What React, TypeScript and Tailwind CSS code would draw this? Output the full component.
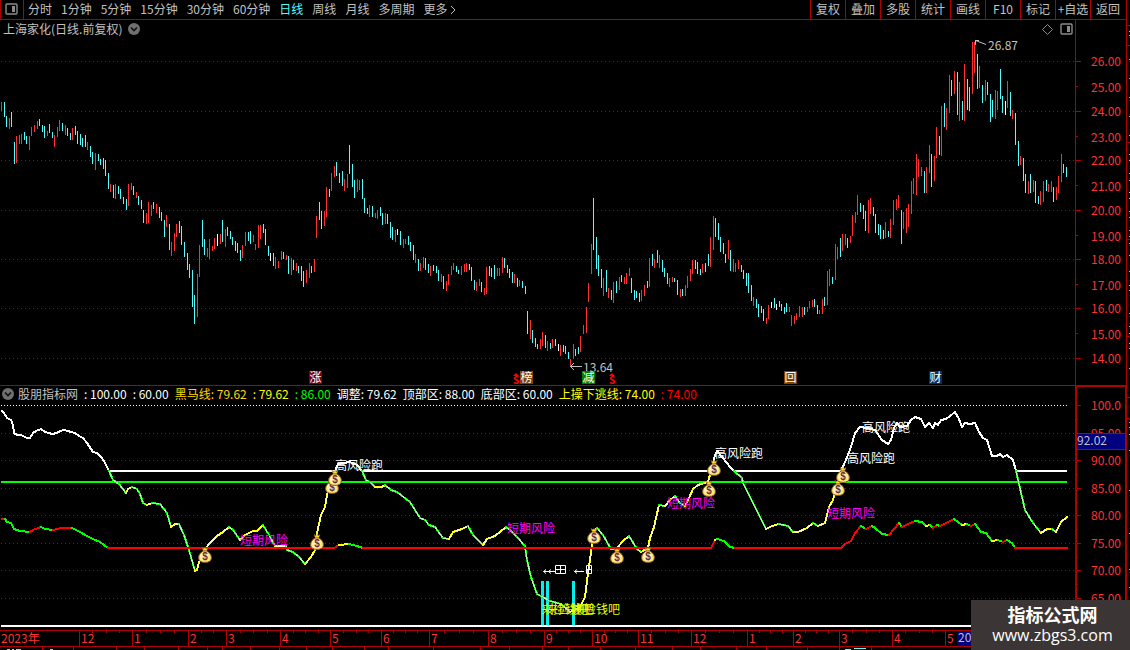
type Point = [number, number];

const RED = "#b00000";
const LABEL_RED = "#ff3232";
const UP = "#ff3232";
const DOWN = "#54fcfc";

const periods = ["分时", "1分钟", "5分钟", "15分钟", "30分钟", "60分钟", "日线", "周线", "月线", "多周期", "更多"];
const tools = ["复权", "叠加", "多股", "统计", "画线", "F10", "标记", "+自选", "返回"];

// each bar: x high low, then r (up), c (down) or w (unchanged)
const barData = `
1 102 111r,4 102 117c,6 116 127c,9 118 129r,11 112 127c,14 142 164c,16 136 163r,19 135 144r,21 134 144r,24 132 140c,
26 136 144c,29 136 150r,31 127 136r,34 125 132r,37 121 129r,39 119 126c,42 125 132c,44 126 138c,47 131 136r,49 124 133c,
52 132 138c,54 135 147r,57 127 137r,59 120 131r,62 123 131c,65 125 135r,67 128 136c,70 133 140c,72 128 140r,75 126 135c,
77 131 144c,80 134 145c,82 138 147c,85 135 147c,87 142 150r,90 146 157c,92 152 164c,95 153 170r,98 154 161c,100 159 165c,
103 158 169c,105 160 176c,108 173 189c,110 184 192r,113 185 198c,115 184 199r,118 186 194c,120 189 199c,123 197 204c,
126 199 210c,128 184 206r,131 183 190r,133 186 195c,136 192 198r,138 196 205c,141 200 209c,143 210 223c,146 213 224r,
148 202 223r,151 205 216r,153 202 209c,156 204 213r,159 207 218c,161 212 221c,164 220 237c,166 215 227r,169 224 250c,
171 242 256r,174 233 251r,176 224 237r,179 221 233c,181 226 245c,184 242 257c,187 253 270c,189 264 278c,192 270 307c,
194 295 324c,197 274 317r,199 245 277r,202 220 247c,204 239 255c,207 248 257r,209 239 259r,212 246 251r,214 238 249r,
217 234 246w,220 234 244r,222 220 242c,225 229 247r,227 227 236c,230 231 239c,232 237 245c,235 241 251c,237 243 253c,
240 250 261c,242 245 258r,245 232 246r,248 232 241c,250 231 244c,253 235 242r,255 244 250r,258 225 248r,260 225 239r,
263 224 233c,265 229 245c,268 246 256c,270 253 261w,273 253 266c,275 257 269r,278 261 268r,281 251 260r,283 252 259c,
286 255 260r,288 256 274c,291 258 275r,293 260 270c,296 263 271r,298 266 273c,301 266 281c,303 271 287c,306 270 283r,
309 263 278r,311 266 273c,314 259 272r,316 216 238r,319 202 220c,321 211 229c,324 211 226r,326 187 217r,329 189 197c,
331 173 191r,334 166 177r,336 162 176c,339 173 183c,342 171 186c,344 179 191r,347 174 188r,349 145 174c,352 164 187c,
354 180 198c,357 179 192r,359 180 190r,362 179 199c,364 198 213c,367 208 214c,369 205 217r,372 206 217c,375 213 218r,
377 210 219r,380 207 216c,382 213 225c,385 213 224r,387 214 224c,390 222 238c,392 227 240c,395 230 242r,397 229 235w,
400 231 245c,403 239 248r,405 239 244r,408 236 245c,410 242 251c,413 245 260c,415 254 263r,418 259 271c,420 263 271r,
423 257 268r,425 258 270c,428 264 273c,430 266 276r,433 265 271c,436 266 273c,438 270 281c,441 274 282r,443 276 289c,
446 281 291r,448 274 285r,451 266 275r,453 263 270r,456 266 272c,458 270 274c,461 266 275r,464 264 272r,466 263 272r,
469 264 270c,471 267 281c,474 280 290c,476 282 291r,479 279 286r,481 282 292c,484 288 295r,486 267 294r,489 266 276c,
491 268 277c,494 265 279c,497 268 276r,499 268 276r,502 257 273r,504 258 268c,507 265 273c,509 269 278c,512 272 283c,
514 274 283r,517 278 287c,519 280 286r,522 281 288c,525 286 294c,527 311 334c,530 320 339r,532 330 343c,535 338 347c,
537 344 349c,540 339 349r,542 332 346r,545 335 348c,547 341 351r,550 343 349c,552 339 348r,555 339 346c,558 344 351w,
560 345 356r,563 345 352c,565 346 354c,568 352 359c,570 359 367r,573 344 359r,575 349 356c,578 347 354c,580 336 352r,
583 325 334r,586 307 333r,588 283 302r,591 244 274r,593 198 250c,596 237 269c,598 255 276c,601 269 288c,603 278 296r,
606 270 292c,608 288 298r,611 290 300c,613 282 303r,616 281 293c,619 277 290r,621 275 282c,624 277 284r,626 273 284r,
629 268 276r,631 278 293c,634 290 300c,636 291 298c,639 293 302c,641 290 301r,644 285 296r,647 281 288c,649 258 287r,
652 254 266c,654 259 268r,657 250 263c,659 255 268r,662 260 272c,664 268 277c,667 273 284c,669 278 287r,672 277 282r,
674 278 282c,677 280 295c,680 289 297r,682 289 296c,685 285 296r,687 276 288r,690 269 281r,692 260 274r,695 260 269c,
697 262 274c,700 269 275c,702 264 273r,705 263 272c,708 254 266c,710 237 267r,713 216 250r,715 218 237c,718 223 240c,
720 237 252c,723 243 254c,725 254 263c,728 240 259r,730 250 271c,733 259 272r,735 263 272r,738 260 269r,741 265 272c,
743 270 279c,746 273 286c,748 273 293c,751 285 301c,753 297 306r,756 299 308c,758 304 317c,761 306 313c,763 309 321c,
766 318 324r,768 305 319r,771 302 308w,774 298 308c,776 304 310w,779 301 307c,781 304 311c,784 307 314c,786 303 312c,
789 307 312r,791 315 326r,794 316 324r,796 313 320r,799 306 317r,802 307 317r,804 307 315c,807 307 312r,809 301 308r,
812 300 307r,814 299 307c,817 305 314c,819 310 314r,822 299 314r,824 297 306c,827 271 305r,829 269 286r,832 277 284c,
835 244 280r,837 247 259r,840 238 257c,842 234 251r,845 234 245r,847 238 248c,850 236 243r,852 215 236r,855 212 223r,
857 195 215r,860 203 212c,863 205 219c,865 211 231c,868 200 233r,870 198 214r,873 207 216c,875 214 233c,878 224 235c,
880 225 239c,883 230 239c,885 222 238r,888 231 237c,890 219 238r,893 200 225r,896 199 210r,898 195 208r,901 210 244c,
903 212 229r,906 208 233r,908 204 227r,911 181 214r,913 178 194r,916 154 195r,918 159 177r,921 167 176r,924 171 193c,
926 167 193r,929 145 173r,931 154 187c,934 156 181r,936 127 158r,939 136 155c,941 106 156r,944 103 127c,946 108 130r,
949 75 113r,951 80 96c,954 71 94r,957 72 115c,959 82 121r,962 101 120c,964 64 121r,967 79 110c,969 87 111c,972 42 94r,
974 42 73r,977 54 89c,979 66 88r,982 85 103c,985 80 101r,987 82 95c,990 94 122c,992 100 117c,995 90 119r,997 91 110r,
1000 69 99c,1002 96 113c,1005 101 115w,1007 81 108r,1010 92 116c,1012 110 119r,1015 113 145c,1018 141 166c,1020 156 165r,
1023 158 181c,1025 174 193c,1028 181 194r,1030 174 193c,1033 180 192r,1035 181 203c,1038 196 204c,1040 191 205r,
1043 181 202r,1046 180 191c,1048 184 192r,1051 181 192r,1053 187 202c,1056 187 200r,1058 176 193r,1061 154 182r,
1063 164 173c,1066 167 177c`;

const bars = barData
  .trim()
  .split(",")
  .map((entry) => {
    const raw = entry.trim();
    const [x, high, low] = raw.slice(0, -1).split(" ").map(Number);
    return { x, high, low, kind: raw.slice(-1) };
  });

const curveData =
  "2,411 4,413 7,418 11,420 13,425 14,433 17,435 21,435 25,437 27,438 30,438 33,433 36,431 41,429 45,432 49,433 52,434 57,433 60,431 64,430 68,431 71,432 75,433 79,436 83,438 87,443 93,452 97,453 102,458 105,463 109,471 " +
  "113,480 119,484 126,493 128,489 132,487 137,489 140,494 143,503 147,505 152,503 160,504 167,513 171,527 175,524 179,524 184,535 189,550 195,571 197,570 199,562 204,550 210,543 217,536 223,532 229,527 233,530 240,540 245,535 253,531 257,531 263,525 269,535 275,546 286,546 287,550 293,552 299,557 305,564 311,557 315,550 317,533 321,515 325,507 328,490 332,480 335,471 " +
  "338,464 343,463 350,462 357,465 362,471 366,480 370,482 375,487 382,487 385,485 391,490 397,492 410,502 420,518 425,520 429,525 435,527 443,538 449,539 453,532 462,529 468,526 473,535 483,545 487,539 495,536 506,527 510,530 517,537 525,546 527,560 531,577 537,594 541,596 550,601 561,604 570,612 580,607 585,597 588,573 591,553 593,533 597,528 603,535 611,549 617,548 " +
  "623,541 629,536 637,549 641,552 648,548 650,538 654,527 659,505 665,506 670,500 675,496 680,503 685,506 689,498 693,489 698,485 708,482 711,471 715,455 717,451 723,458 730,467 734,471 742,478 743,483 766,529 772,526 779,524 788,526 793,532 798,532 807,528 813,523 818,526 825,523 829,507 833,500 837,483 841,471 " +
  "846,460 851,447 855,433 860,427 867,428 875,430 882,440 888,444 891,440 894,428 897,423 900,427 907,426 911,420 915,417 921,419 925,427 929,423 933,428 935,423 938,425 941,420 946,419 950,416 955,412 959,419 962,427 965,423 970,424 975,423 979,432 983,438 987,440 992,456 997,456 1000,454 1003,457 1007,455 1013,460 1016,471 1025,510 1033,523 1041,533 1047,529 1052,529 1056,532 1061,522 1067,517";

const escapeData =
  "2,519 5,519 7,522 11,523 14,529 20,531 30,532 33,530 41,527 45,529 53,530 61,528 72,528 80,532 87,536 93,539 100,542 108,548 334,548 339,545 349,544 357,546 363,548 711,548 715,540 717,539 724,541 730,547 735,548 841,548 845,544 851,541 855,533 861,526 866,529 872,526 875,528 882,534 889,535 899,523 902,527 908,524 915,521 922,522 926,526 930,525 933,528 937,525 940,526 946,523 954,519 962,525 967,524 971,526 975,524 981,532 986,533 992,541 998,540 1003,542 1007,540 1012,543 1015,548 1067,548";

const toPoints = (data: string) => data.split(" ").map((p) => p.split(",").map(Number) as Point);

const curve = toPoints(curveData);
const escapeLine = toPoints(escapeData);

const priceLabels = [26, 25, 24, 23, 22, 21, 20, 19, 18, 17, 16, 15, 14];
const priceY = [61, 86, 111, 136, 160, 185, 210, 235, 259, 284, 308, 333, 358];

const levels: [string, number][] = [
  ["100.0", 405],
  ["95.00", 433],
  ["90.00", 460],
  ["85.00", 488],
  ["80.00", 515],
  ["75.00", 543],
  ["70.00", 570],
  ["65.00", 598],
];

const months: [string, number][] = [
  ["12", 79],
  ["1", 132],
  ["2", 188],
  ["3", 226],
  ["4", 280],
  ["5", 330],
  ["6", 381],
  ["7", 429],
  ["8", 488],
  ["9", 544],
  ["10", 592],
  ["11", 638],
  ["12", 691],
  ["1", 747],
  ["2", 793],
  ["3", 839],
  ["4", 892],
  ["5", 945],
];

const footTicks = [42, 73, 116, 144, 178, 207, 222, 250, 279, 306, 332, 364, 388, 433, 480, 509, 542, 568, 600, 635, 672, 700, 736, 766, 807, 839, 871];

const bags: Point[] = [
  [205, 556],
  [317, 543],
  [332, 487],
  [335, 479],
  [594, 537],
  [617, 557],
  [648, 556],
  [709, 490],
  [714, 469],
  [838, 489],
  [843, 476],
];

const notes = [
  { text: "高风险跑", x: 335, y: 466, color: "#ffffff" },
  { text: "高风险跑", x: 715, y: 454, color: "#ffffff" },
  { text: "高风险跑", x: 847, y: 459, color: "#ffffff" },
  { text: "高风险跑", x: 862, y: 428, color: "#ffffff" },
  { text: "短期风险", x: 240, y: 541, color: "#ff00ff" },
  { text: "短期风险", x: 507, y: 529, color: "#ff00ff" },
  { text: "短期风险", x: 667, y: 504, color: "#ff00ff" },
  { text: "短期风险", x: 827, y: 514, color: "#ff00ff" },
  { text: "来捡钱吧", x: 541, y: 610, color: "#e0ff00" },
  { text: "来捡钱吧", x: 546, y: 610, color: "#e0ff00" },
  { text: "来捡钱吧", x: 572, y: 610, color: "#e0ff00" },
];

const badges = [
  { text: "涨", x: 309, fill: "#800000" },
  { text: "榜", x: 520, fill: "#804000" },
  { text: "减", x: 582, fill: "#008000" },
  { text: "回", x: 784, fill: "#804000" },
  { text: "财", x: 929, fill: "#003068" },
];

const readings = [
  { text: ": 100.00", className: "text-white" },
  { text: ": 60.00", className: "text-white" },
  { text: "黑马线: 79.62", className: "text-[#ffd800]" },
  { text: ": 79.62", className: "text-[#ffff00]" },
  { text: ": 86.00", className: "text-[#00ff00]" },
  { text: "调整: 79.62", className: "text-white" },
  { text: "顶部区: 88.00", className: "text-white" },
  { text: "底部区: 60.00", className: "text-white" },
  { text: "上操下逃线: 74.00", className: "text-[#ffff00]" },
  { text: ": 74.00", className: "text-[#ff0000]" },
];

function barColor(kind: string) {
  if (kind === "r") return UP;
  return kind === "c" ? DOWN : "#ffffff";
}

function PanelIcon() {
  return (
    <svg width="13" height="12" viewBox="0 0 13 12" className="block" aria-hidden="true">
      <rect x="1" y="1" width="11" height="10" rx="1" fill="none" stroke="#8c8c8c" strokeWidth="1.4" />
      <rect x="7" y="3" width="3" height="6" fill="#8c8c8c" />
    </svg>
  );
}

function ChevronIcon() {
  return (
    <svg width="12" height="12" viewBox="0 0 12 12" className="block" aria-hidden="true">
      <circle cx="6" cy="6" r="6" fill="#707070" />
      <path d="M3 4.5 L6 7.5 L9 4.5" fill="none" stroke="#101010" strokeWidth="1.6" />
    </svg>
  );
}

function MoneyBag({ x, y }: { x: number; y: number }) {
  return (
    <g transform={`translate(${x} ${y})`}>
      <path d="M-3 -8.5 L-1 -7.4 L0 -8.4 L1.2 -7.4 L3 -8.5 L1.6 -4.5 H-1.6 Z" fill="#ffd820" stroke="#805010" strokeWidth="0.5" />
      <path
        d="M-1.8 -5 H1.8 C4.5 -3.5 6.6 -1 6.4 2 C6.2 5 4 6.4 0 6.4 C-4 6.4 -6.2 5 -6.4 2 C-6.6 -1 -4.5 -3.5 -1.8 -5 Z"
        fill="#ffe868"
        stroke="#8a5030"
      />
      <ellipse cx="-0.6" cy="0.6" rx="4.2" ry="4" fill="#fff4c8" />
      <text x="0" y="4" textAnchor="middle" fontSize="10" fontWeight="bold" fill="#6a3030" fontFamily="Liberation Sans, sans-serif">
        $
      </text>
    </g>
  );
}

function PriceChart() {
  return (
    <svg viewBox="0 38 1126 347" className="block h-auto w-full overflow-visible" role="img" aria-label="日线">
      <g shapeRendering="crispEdges">
        {priceY.map((y, i) => (
          <g key={y} stroke={RED}>
            {i % 2 === 0 && <line x1="1" x2="1075" y1={y + 0.5} y2={y + 0.5} strokeDasharray="1 3" />}
            <line x1="1076" x2={i % 2 === 0 ? 1081 : 1078} y1={y + 0.5} y2={y + 0.5} />
          </g>
        ))}
        <rect x="1075" y="38" width="1" height="347" fill={RED} />
        {bars.map((bar) => (
          <rect key={bar.x} x={bar.x} y={bar.high} width="1" height={bar.low - bar.high} fill={barColor(bar.kind)} />
        ))}
      </g>

      {priceLabels.map((price, i) => (
        <text key={price} x="1121" y={priceY[i] + (i % 2 === 0 ? 5 : 6)} textAnchor="end" fontSize="12" fill={LABEL_RED}>
          {price}.00
        </text>
      ))}

      {/* high and low callouts */}
      <g fill="none" stroke="#c0c0c0">
        <path d="M975.5 45 V40.5 L986 44.5 M975 40.5 H979" />
        <path d="M570 366.5 H582 M574 363 L570.5 366.5 L574 370" />
      </g>
      <text x="988" y="50" fontSize="12" fill="#c0c0c0">26.87</text>
      <text x="583" y="372" fontSize="12" fill="#c0c0c0">13.64</text>

      {/* event badges */}
      {badges.map((badge) => (
        <g key={badge.x}>
          <rect x={badge.x} y="371" width="13" height="13" fill={badge.fill} />
          <text x={badge.x + 6.5} y="382" textAnchor="middle" fontSize="12" fill="#ffffff">
            {badge.text}
          </text>
        </g>
      ))}
      {[516, 612].map((x) => (
        <g key={x} fill="#ff0000">
          <path d={`M${x - 3} 376 L${x} 373 L${x + 3} 376 Z`} />
          <text x={x} y="384" textAnchor="middle" fontSize="10" fontWeight="bold">S</text>
        </g>
      ))}
    </svg>
  );
}

function CurveSegments() {
  return (
    <g fill="none" strokeLinecap="square" shapeRendering="crispEdges">
      {curve.slice(1).map(([x, y], i) => {
        const [px, py] = curve[i];
        const line = { x1: px, y1: py, x2: x, y2: y };
        if (Math.max(py, y) <= 471) {
          return <line key={i} {...line} stroke="#ffffff" strokeWidth="2" />;
        }
        return (
          <g key={i}>
            <line {...line} stroke={y > py ? "#00ff00" : "#ffff00"} strokeWidth="2" />
            <line {...line} stroke="#ffffff" strokeWidth="1" strokeOpacity="0.7" />
          </g>
        );
      })}
      {escapeLine.slice(1).map(([x, y], i) => {
        const [px, py] = escapeLine[i];
        let color = "#ff0000";
        if (y > py) color = "#00ff00";
        else if (py - y === 1) color = "#ffff00";
        return <line key={i} x1={px} y1={py} x2={x} y2={y} stroke={color} strokeWidth="2" />;
      })}
    </g>
  );
}

function TimeAxis() {
  return (
    <g>
      <g shapeRendering="crispEdges" fill={RED}>
        <rect x="0" y="630" width="1126" height="1" />
        <rect x="0" y="646" width="1126" height="1" />
        {months.map(([, x], i) => {
          const next = i + 1 < months.length ? months[i + 1][1] : 998;
          const parts = next - x < 42 ? 3 : 4;
          return (
            <g key={x}>
              <rect x={x} y="630" width="1" height="16" />
              {Array.from({ length: parts - 1 }, (_, n) => (
                <rect key={n} x={Math.round(x + ((next - x) * (n + 1)) / parts)} y="630" width="1" height="3" />
              ))}
            </g>
          );
        })}
        {footTicks.map((x) => (
          <rect key={x} x={x} y="647" width="1" height="3" />
        ))}
        <rect x="957" y="631" width="40" height="15" fill="#000080" />
        <path d="M7 649h3v1h-3z M12 649h2v1h-2z M16 649h5v1h-5z M50 649h3v1h-3z" fill="#c0c0c0" />
        <path d="M845 649h6v1h-6z M854 648h12v1h-12z" fill={DOWN} />
      </g>
      <g fontSize="12" fill={LABEL_RED}>
        <text x="1" y="643">2023年</text>
        {months.map(([label, x]) => (
          <text key={x} x={x + 2} y="643">
            {label}
          </text>
        ))}
        <text x="958" y="642" fill="#c0c0c0">20</text>
      </g>
    </g>
  );
}

function IndicatorChart() {
  return (
    <svg viewBox="0 403 1126 247" className="block h-auto w-full overflow-visible" role="img" aria-label="股朋指标网">
      <g shapeRendering="crispEdges">
        {levels.slice(1).map(([label, y]) => (
          <line key={label} x1="1" x2="1075" y1={y + 0.5} y2={y + 0.5} stroke={RED} strokeDasharray="1 3" />
        ))}
        <line x1="1" x2="1067" y1="405.5" y2="405.5" stroke="#ffffff" strokeDasharray="1 2" />
        <g fill="#ffffff">
          <rect x="109" y="470" width="225" height="2" />
          <rect x="362" y="470" width="349" height="2" />
          <rect x="734" y="470" width="107" height="2" />
          <rect x="1016" y="470" width="51" height="2" />
          <rect x="1" y="625" width="1066" height="2" />
        </g>
        <rect x="1" y="481" width="1066" height="2" fill="#00ff00" />
        <g fill="#00f0f0">
          <rect x="541" y="581" width="3" height="44" />
          <rect x="546" y="581" width="3" height="44" />
          <rect x="572" y="581" width="3" height="44" />
        </g>
      </g>

      <CurveSegments />

      {bags.map(([x, y]) => (
        <MoneyBag key={`${x}-${y}`} x={x} y={y} />
      ))}

      {notes.map((note) => (
        <text key={`${note.x}-${note.y}`} x={note.x} y={note.y + 4} fontSize="12" fill={note.color}>
          {note.text}
        </text>
      ))}

      <g fill="none" stroke="#ffffff">
        <path d="M543.5 571.5 H556 M546 569.5 L543.5 571.5 L546 573.5 M551 569.5 L548.5 571.5 L551 573.5" />
        <path d="M555.5 565.5 H565.5 V573.5 H555.5 Z M560.5 565.5 V573.5 M555.5 569.5 H565.5" />
        <path d="M574.5 571.5 H584 M577 569.5 L574.5 571.5 L577 573.5" />
        <path d="M586.5 565.5 H591.5 V573.5 H586.5 Z M588.5 565.5 V573.5 M586.5 569.5 H591.5" />
      </g>

      <TimeAxis />

      {/* value scale */}
      <g shapeRendering="crispEdges" fill={RED}>
        <rect x="1075" y="403" width="2" height="247" />
        <rect x="1125" y="403" width="1" height="247" />
        {levels.map(([label, y]) => (
          <g key={label}>
            <rect x="1077" y={y} width="4" height="1" />
            <rect x="1077" y={y + 14} width="1" height="1" />
          </g>
        ))}
      </g>
      {levels.map(([label, y]) => (
        <text key={label} x="1121" y={y + 5} textAnchor="end" fontSize="12" fill={LABEL_RED}>
          {label}
        </text>
      ))}
      <rect x="1077" y="433" width="48" height="16" fill="#000080" />
      <path d="M1077 433.5 H1125 M1077 449.5 H1125" stroke={RED} shapeRendering="crispEdges" />
      <text x="1077" y="445" fontSize="12" fill="#c0c0c0">92.02</text>
    </svg>
  );
}

export default function App() {
  return (
    <div className="relative flex min-h-screen overflow-hidden bg-black font-['Noto_Sans_CJK_SC','Noto_Sans',sans-serif] text-[12px] leading-[18px] text-[#c0c0c0]">
      <main className="min-w-0 flex-1 border-r border-[#b00000]">
        {/* Toolbar */}
        <header className="flex h-5 items-stretch border-b border-l border-[#b00000] whitespace-nowrap">
          <button type="button" aria-label="侧栏" className="flex w-[23px] shrink-0 items-center justify-center border-r border-[#b00000] pr-0.5 pb-0.5">
            <PanelIcon />
          </button>
          <nav className="flex flex-1 gap-[9px] pl-1">
            {periods.map((name) => (
              <button key={name} type="button" className={name === "日线" ? "pb-0.5 text-[#54fcfc]" : "pb-0.5"}>
                {name}
              </button>
            ))}
            <svg width="6" height="10" viewBox="0 0 6 10" className="-ml-1.5 self-center" aria-hidden="true">
              <path d="M1 1 L5 5 L1 9" fill="none" stroke="#c0c0c0" />
            </svg>
          </nav>
          <div className="flex border-r border-transparent">
            {tools.map((name) => (
              <button key={name} type="button" className="w-[35px] border-l border-[#b00000] pb-0.5 text-center">
                {name}
              </button>
            ))}
          </div>
        </header>

        {/* Price pane */}
        <div className="flex h-[18px] items-stretch">
          <div className="flex flex-1 items-center gap-1.5 pl-[3px]">
            <h1>上海家化(日线.前复权)</h1>
            <button type="button" aria-label="展开">
              <ChevronIcon />
            </button>
          </div>
          <div className="flex items-center gap-[7px] pr-[2px]">
            <svg width="11" height="11" viewBox="0 0 11 11" aria-hidden="true">
              <path d="M5.5 0.5 L10.5 5.5 L5.5 10.5 L0.5 5.5 Z" fill="none" stroke="#8c8c8c" />
            </svg>
            <PanelIcon />
          </div>
          <div className="w-[51px] border-l border-[#b00000]" />
        </div>
        <PriceChart />

        {/* Indicator pane */}
        <section className="border-t border-[#b00000]">
          <div className="flex h-[17px] items-stretch leading-4 whitespace-nowrap">
            <div className="flex min-w-0 flex-1 items-start gap-1.5 overflow-hidden pl-[2px]">
              <button type="button" aria-label="展开" className="pt-[2px]">
                <ChevronIcon />
              </button>
              <h2 className="-ml-[2px]">股朋指标网</h2>
              {readings.map((item, i) => (
                <span key={i} className={item.className}>
                  {item.text}
                </span>
              ))}
            </div>
            <div className="w-[51px] border-t border-r border-l-2 border-[#b00000]" />
          </div>
          <IndicatorChart />
        </section>
      </main>

      {/* Edge of the neighbouring panel */}
      <svg width="3" height="650" viewBox="1127 0 3 650" className="block shrink-0" shapeRendering="crispEdges" aria-hidden="true">
        {[25, 45, 142, 239, 336, 397, 418].map((y) => (
          <rect key={y} x="1127" y={y} width="3" height="1" fill={RED} />
        ))}
        {[31, 35, 59, 78, 97, 116, 135, 154, 160, 173, 180, 192, 198, 211, 217, 230, 236, 243, 255, 271, 285, 290, 313, 326, 333, 343, 348, 368, 422, 427, 434, 450, 490, 533, 569, 587].map((y) => (
          <rect key={y} x="1129" y={y} width="1" height="1" fill="#c0c0c0" />
        ))}
      </svg>

      {/* Watermark */}
      <a href="#home" className="absolute right-0 bottom-0 flex h-[50px] w-[159px] flex-col items-center justify-center bg-[#3c3535] pb-0.5 pl-1 text-white">
        <strong className="text-[18px] leading-[22px] font-bold">指标公式网</strong>
        <span className="font-['Open_Sans','Noto_Sans',sans-serif] text-[16px] leading-5">www.zbgs3.com</span>
      </a>
    </div>
  );
}
